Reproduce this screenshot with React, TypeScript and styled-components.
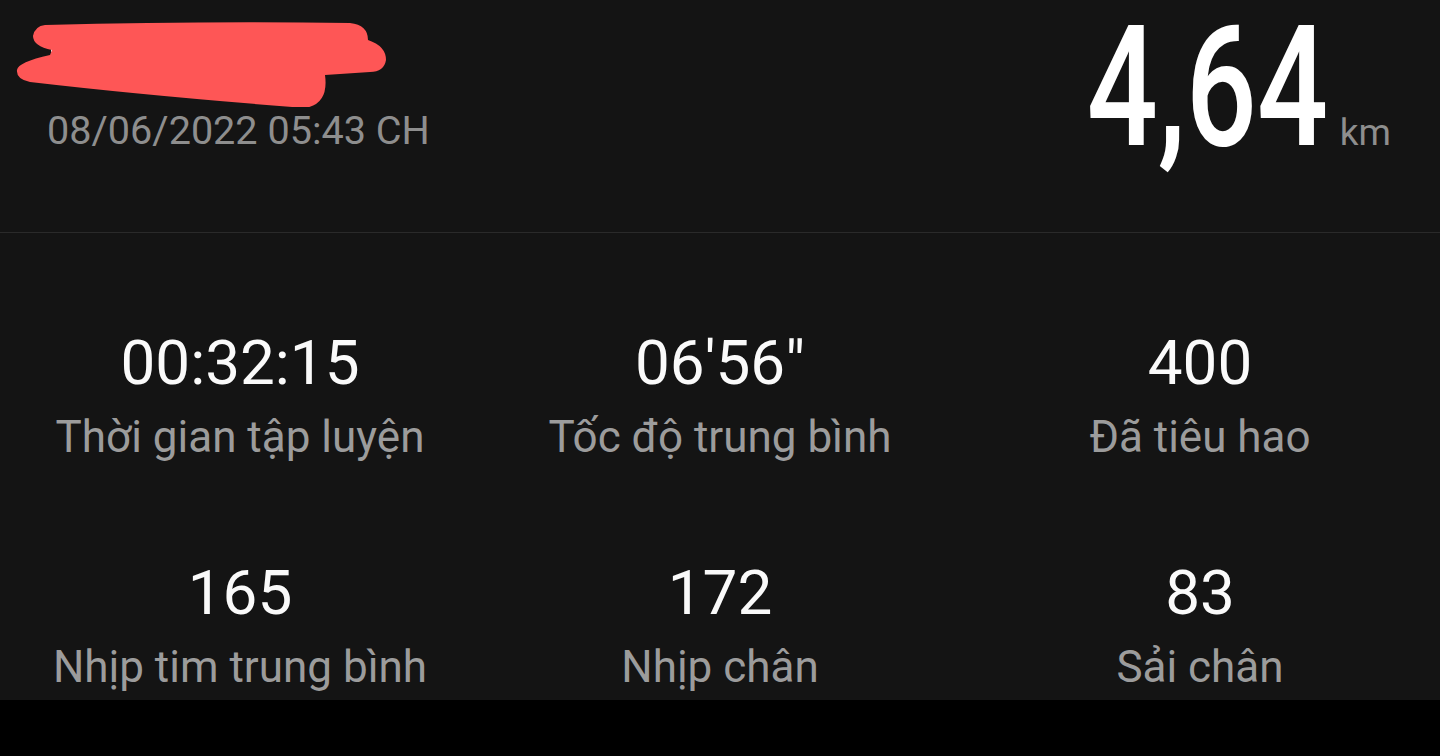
import React from "react"
import styled, { createGlobalStyle } from "styled-components"

const GlobalStyle = createGlobalStyle`
	html, body {
		margin: 0;
		padding: 0;
		background: #141414;
	}
	body {
		font-family: Roboto, "Noto Sans", "Liberation Sans", sans-serif;
	}
`

const Screen = styled.div`
	width: 1440px;
	height: 756px;
	display: flex;
	flex-direction: column;
	background: #141414;
	overflow: hidden;
`

const Header = styled.div`
	height: 232px;
	display: flex;
	justify-content: space-between;
	align-items: flex-start;
	border-bottom: 1px solid #2a2a2a;
`

const TitleBlock = styled.div`
	display: flex;
	flex-direction: column;
`

const Scribble = styled.svg`
	display: block;
	width: 400px;
	height: 107px;
`

const DateText = styled.div`
	padding-left: 47px;
	font-size: 39.6px;
	line-height: 48px;
	color: #8e8e8e;
	white-space: nowrap;
`

const Distance = styled.div`
	display: flex;
	align-items: baseline;
	gap: 14px;
	padding-right: 49px;
	margin-top: 4px;
`

const DistanceValue = styled.span`
	display: inline-block;
	font-size: 168px;
	line-height: 168px;
	font-weight: 500;
	color: #ffffff;
	transform: scaleX(0.745);
	transform-origin: right center;
	margin-right: -2px;
`

const DistanceUnit = styled.span`
	font-size: 37px;
	color: #8e8e8e;
`

const StatsGrid = styled.div`
	flex: 1;
	display: grid;
	grid-template-columns: repeat(3, 1fr);
	row-gap: 94px;
	align-content: start;
	padding-top: 94px;
`

const Stat = styled.div`
	display: flex;
	flex-direction: column;
	align-items: center;
	gap: 13px;
`

const StatValue = styled.div`
	font-size: 62px;
	line-height: 72px;
	color: #fafafa;
	white-space: nowrap;
`

const StatLabel = styled.div`
	font-size: 44px;
	line-height: 51px;
	color: #9c9c9c;
	white-space: nowrap;
`

const BottomBar = styled.div`
	height: 56px;
	background: #000000;
`

const stats = [
	{ value: "00:32:15", label: "Thời gian tập luyện" },
	{ value: "06'56\"", label: "Tốc độ trung bình" },
	{ value: "400", label: "Đã tiêu hao" },
	{ value: "165", label: "Nhịp tim trung bình" },
	{ value: "172", label: "Nhịp chân" },
	{ value: "83", label: "Sải chân" },
]

export default function App() {
	return (
		<Screen>
			<GlobalStyle />
			<Header>
				<TitleBlock>
					<Scribble viewBox="0 0 400 107">
						<rect x="51" y="46" width="3" height="6" fill="#f0f0f0" />
						<path
							d="M 45 25 Q 200 21 350 23 Q 368 25 368 40 Q 386 46 386 60 Q 384 72 370 72 L 325 75 Q 329 104 305 108 Q 150 96 30 82 Q 16 79 17 70 Q 18 62 50 55 L 52 50 Q 33 46 33 36 Q 35 26 45 25 Z"
							fill="#fe5656"
						/>
					</Scribble>
					<DateText>08/06/2022 05:43 CH</DateText>
				</TitleBlock>
				<Distance>
					<DistanceValue>4,64</DistanceValue>
					<DistanceUnit>km</DistanceUnit>
				</Distance>
			</Header>
			<StatsGrid>
				{stats.map((s, i) => (
					<Stat key={i}>
						<StatValue>{s.value}</StatValue>
						<StatLabel>{s.label}</StatLabel>
					</Stat>
				))}
			</StatsGrid>
			<BottomBar />
		</Screen>
	)
}
